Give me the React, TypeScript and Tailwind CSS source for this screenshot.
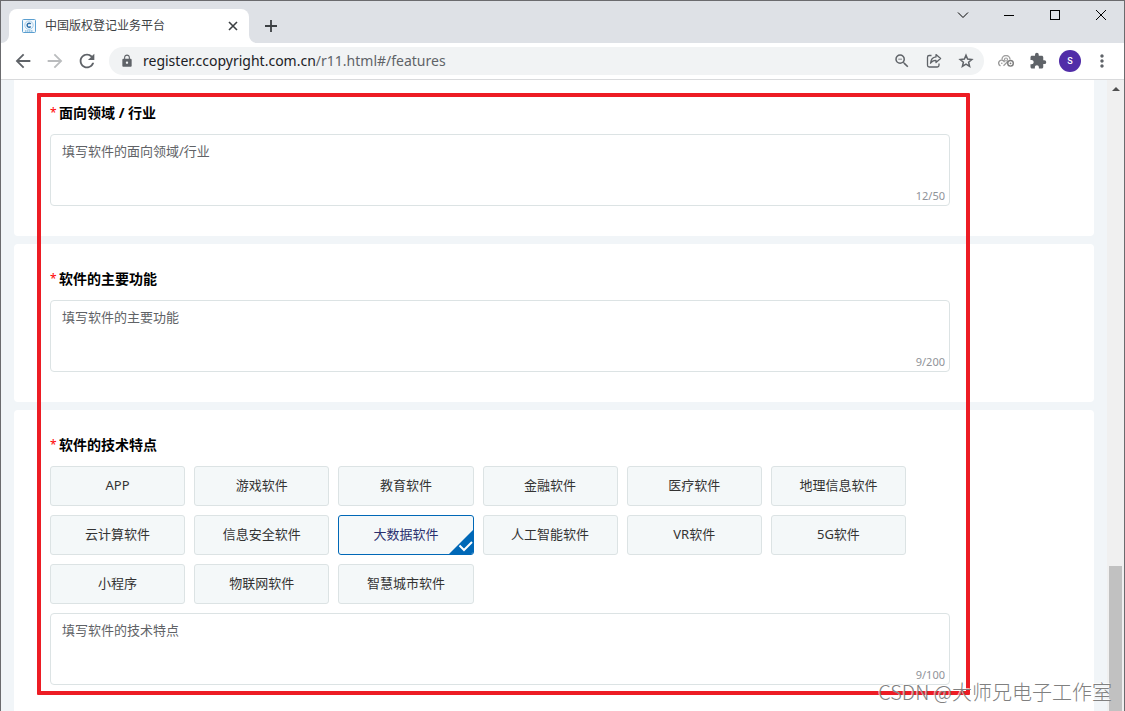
import { useState } from "react";
import {
    MdArrowBack,
    MdArrowForward,
    MdExtension,
    MdLock,
    MdMoreVert,
    MdRefresh,
    MdZoomOut,
} from "react-icons/md";

const softwareTypes = [
    "APP",
    "游戏软件",
    "教育软件",
    "金融软件",
    "医疗软件",
    "地理信息软件",
    "云计算软件",
    "信息安全软件",
    "大数据软件",
    "人工智能软件",
    "VR软件",
    "5G软件",
    "小程序",
    "物联网软件",
    "智慧城市软件",
];

function Favicon() {
    return (
        <svg viewBox="0 0 14 14" className="w-3.5 h-3.5 shrink-0" fill="none">
            <rect x="0.5" y="0.5" width="13" height="13" rx="1" fill="#f4f9fd" stroke="#5b9fd0" />
            <circle cx="7" cy="6.2" r="4.2" stroke="#a5cde9" strokeWidth="1" />
            <path d="M8.7 5A2 2 0 1 0 8.7 7.5" stroke="#2b6ea8" strokeWidth="1.5" />
            <path d="M3 12h8" stroke="#5b9fd0" strokeWidth="1.2" strokeDasharray="1.5 0.5" />
        </svg>
    );
}

function ShareIcon() {
    return (
        <svg viewBox="0 0 16 16" className="w-4 h-4" fill="none" stroke="currentColor" strokeWidth="1.3" strokeLinejoin="round">
            <path d="M5.5 2.5H3.2A1.7 1.7 0 0 0 1.5 4.2V12.3A1.7 1.7 0 0 0 3.2 14H11.3A1.7 1.7 0 0 0 13 12.3V10.5" />
            <path d="M10 1.6L14.6 5.6L10 9.6V7.4C7.6 7.3 5.8 8.2 4.5 10.2C4.8 6.7 6.7 4.3 10 3.9Z" />
        </svg>
    );
}

function StarIcon() {
    return (
        <svg viewBox="0 0 16 16" className="w-4 h-4" fill="none" stroke="currentColor" strokeWidth="1.5">
            <path d="M8 2.2L9.6 6.1L13.8 6.5L10.6 9.2L11.6 13.3L8 11.1L4.4 13.3L5.4 9.2L2.2 6.5L6.4 6.1Z" />
        </svg>
    );
}

function RingsIcon() {
    return (
        <svg viewBox="0 0 16 12" className="w-4 h-3" fill="none">
            <path d="M4 4.5A4 4 0 0 1 12 4.5" stroke="#a0a0a0" strokeWidth="1.4" />
            <circle cx="8" cy="4.5" r="1.5" stroke="#a0a0a0" strokeWidth="1.2" />
            <path d="M2.5 10.9A3 3 0 1 1 6.5 7.2" stroke="#9a9a9a" strokeWidth="1.4" />
            <circle cx="3.8" cy="8.3" r="0.8" fill="#9a9a9a" />
            <path d="M5.5 10.8L10 6.2" stroke="#9a9a9a" strokeWidth="1.3" />
            <circle cx="12.5" cy="8.3" r="2.8" stroke="#7c7c7c" strokeWidth="1.4" />
            <circle cx="12.5" cy="8.3" r="0.9" fill="#7c7c7c" />
        </svg>
    );
}

function TabStrip() {
    return (
        <div className="flex h-[42px] shrink-0 items-start bg-[#dee1e6]">
            <div className="relative ml-2 mt-2 flex h-[34px] w-60 items-center rounded-t-lg bg-white pl-[13px] pr-2">
                <svg viewBox="0 0 8 8" className="absolute -left-2 bottom-0 h-2 w-2">
                    <path d="M8 0V8H0A8 8 0 0 0 8 0Z" fill="#fff" />
                </svg>
                <svg viewBox="0 0 8 8" className="absolute -right-2 bottom-0 h-2 w-2">
                    <path d="M0 0V8H8A8 8 0 0 1 0 0Z" fill="#fff" />
                </svg>
                <Favicon />
                <span className="ml-[9px] flex-1 text-xs text-[#3c4043]">中国版权登记业务平台</span>
                <button aria-label="关闭标签页" className="flex h-4 w-4 items-center justify-center">
                    <svg viewBox="0 0 10 10" className="h-2.5 w-2.5" stroke="#3c4043" strokeWidth="1.6">
                        <path d="M1 1L9 9M9 1L1 9" />
                    </svg>
                </button>
            </div>
            <button aria-label="新标签页" className="ml-2 mt-[11px] flex h-7 w-7 items-center justify-center">
                <svg viewBox="0 0 12 12" className="h-3 w-3" stroke="#3c4043" strokeWidth="1.8">
                    <path d="M6 0V12M0 6H12" />
                </svg>
            </button>
            <div className="ml-auto flex text-black">
                <button aria-label="搜索标签页" className="flex h-7 w-[46px] items-center justify-center">
                    <svg viewBox="0 0 12 8" className="h-2 w-3" fill="none" stroke="currentColor">
                        <path d="M1 1.5L6 6.5L11 1.5" />
                    </svg>
                </button>
                <button aria-label="最小化" className="flex h-7 w-[46px] items-center justify-center">
                    <span className="h-px w-2.5 bg-black"></span>
                </button>
                <button aria-label="最大化" className="flex h-7 w-[46px] items-center justify-center">
                    <span className="h-2.5 w-2.5 border border-black"></span>
                </button>
                <button aria-label="关闭" className="flex h-7 w-[46px] items-center justify-center">
                    <svg viewBox="0 0 12 12" className="h-3 w-3" stroke="currentColor">
                        <path d="M1 1L11 11M11 1L1 11" />
                    </svg>
                </button>
            </div>
        </div>
    );
}

function Toolbar() {
    const iconButton = "flex h-7 w-8 shrink-0 items-center justify-center";

    return (
        <div className="flex h-[37px] shrink-0 items-center border-b border-[#d9dadc] bg-white pl-1.5 pr-1.5 text-[#5f6368]">
            <button aria-label="后退" className={iconButton}>
                <MdArrowBack className="h-[22px] w-[22px]" />
            </button>
            <button aria-label="前进" className={`${iconButton} text-[#babcbe]`}>
                <MdArrowForward className="h-[22px] w-[22px]" />
            </button>
            <button aria-label="重新加载" className={iconButton}>
                <MdRefresh className="h-[22px] w-[22px]" />
            </button>
            <div className="ml-1.5 flex h-7 flex-1 items-center rounded-full bg-[#f1f3f4] pl-[11px] pr-0.5">
                <MdLock className="h-3.5 w-3.5 shrink-0" />
                <div className="ml-[9px] flex-1 text-sm">
                    <span className="text-[#202124]">register.ccopyright.com.cn</span>/r11.html#/features
                </div>
                <button aria-label="缩放" className={iconButton}>
                    <MdZoomOut className="h-[18px] w-[18px]" />
                </button>
                <button aria-label="分享" className={iconButton}>
                    <ShareIcon />
                </button>
                <button aria-label="收藏" className={iconButton}>
                    <StarIcon />
                </button>
            </div>
            <div className="ml-1.5 flex">
                <button aria-label="扩展" className={iconButton}>
                    <RingsIcon />
                </button>
                <button aria-label="扩展程序" className={iconButton}>
                    <MdExtension className="h-[18px] w-[18px]" />
                </button>
                <button aria-label="用户" className={iconButton}>
                    <span className="flex h-[22px] w-[22px] items-center justify-center rounded-full bg-[#512da8] font-['Roboto',sans-serif] text-[9px] font-medium leading-none text-white">
                        S
                    </span>
                </button>
                <button aria-label="菜单" className={iconButton}>
                    <MdMoreVert className="h-5 w-5" />
                </button>
            </div>
        </div>
    );
}

function FieldLabel({ id, text }: { id: string; text: string }) {
    return (
        <label htmlFor={id} className="flex h-[22px] items-center text-sm font-bold text-black">
            <span className="w-[9px] text-xs font-normal text-[#ff0000]">*</span>
            {text}
        </label>
    );
}

function CountedTextarea({ id, initial, count }: { id: string; initial: string; count: string }) {
    return (
        <div className="relative h-[72px] max-w-[900px]">
            <textarea
                id={id}
                defaultValue={initial}
                className="block h-full w-full resize-none rounded border border-[#dce3e4] bg-white px-[11px] py-1.5 text-[13px] leading-5 text-[#606266] outline-none"
            />
            <span className="absolute bottom-0.5 right-[5px] text-[11px] leading-4 text-[#909399]">{count}</span>
        </div>
    );
}

function TypeOption({ name, checked, onChange }: { name: string; checked: boolean; onChange: () => void }) {
    return (
        <label
            className={`relative flex h-10 cursor-pointer items-center justify-center overflow-hidden rounded-[3px] border bg-[#f4f8f9] text-[13px] ${
                checked ? "border-[#0068b7] text-[#2a2f6e]" : "border-[#dce3e4] text-[#333]"
            }`}
        >
            <input type="checkbox" className="sr-only" checked={checked} onChange={onChange} />
            {name}
            {checked && (
                <svg viewBox="0 0 24 24" className="absolute bottom-0 right-0 h-6 w-6" fill="none">
                    <path d="M24 0V24H0Z" fill="#0068b7" />
                    <path d="M10.5 15.5L15 20L23 12" stroke="#fff" strokeWidth="2" />
                </svg>
            )}
        </label>
    );
}

export default function App() {
    const [selected, setSelected] = useState<string[]>(["大数据软件"]);

    const toggle = (name: string) =>
        setSelected((prev) => (prev.includes(name) ? prev.filter((n) => n !== name) : [...prev, name]));

    return (
        <div className="relative flex h-screen flex-col overflow-hidden border-x border-t border-[#6b6b6e] bg-white font-['Noto_Sans','Noto_Sans_CJK_SC',sans-serif]">
            <TabStrip />
            <Toolbar />

            <div className="flex min-h-0 flex-1">
                <main className="relative flex min-w-0 flex-1 flex-col gap-2 overflow-hidden bg-[#f1f5f8] px-[13px]">
                    <section className="shrink-0 rounded-b bg-white px-9 pb-[30px] pt-[22px]">
                        <FieldLabel id="industry" text="面向领域 / 行业" />
                        <div className="mt-2.5">
                            <CountedTextarea id="industry" initial="填写软件的面向领域/行业" count="12/50" />
                        </div>
                    </section>

                    <section className="shrink-0 rounded bg-white px-9 pb-[30px] pt-6">
                        <FieldLabel id="functions" text="软件的主要功能" />
                        <div className="mt-2.5">
                            <CountedTextarea id="functions" initial="填写软件的主要功能" count="9/200" />
                        </div>
                    </section>

                    <section className="shrink-0 rounded-t bg-white px-9 pb-[30px] pt-6">
                        <FieldLabel id="features" text="软件的技术特点" />
                        <div className="mt-2.5 grid max-w-[856px] grid-cols-6 gap-[9px]">
                            {softwareTypes.map((name) => (
                                <TypeOption
                                    key={name}
                                    name={name}
                                    checked={selected.includes(name)}
                                    onChange={() => toggle(name)}
                                />
                            ))}
                        </div>
                        <div className="mt-[9px]">
                            <CountedTextarea id="features" initial="填写软件的技术特点" count="9/100" />
                        </div>
                    </section>

                    {/* highlight around the fields to fill in */}
                    <div className="pointer-events-none absolute left-9 top-[13px] h-[602px] w-[933px] rounded-[1px] border-4 border-[#ed1c24]"></div>
                </main>

                <div className="flex w-[17px] shrink-0 flex-col items-center bg-[#f0f0f0]">
                    <svg viewBox="0 0 8 4" className="mt-[7px] h-1 w-2">
                        <path d="M4 0L8 4H0Z" fill="#505050" />
                    </svg>
                    <div className="mt-auto h-[145px] w-[13px] bg-[#c1c1c1]"></div>
                </div>
            </div>

            <div className="pointer-events-none absolute bottom-1 right-3 font-['Noto_Sans_CJK_SC',sans-serif] text-xl font-light leading-[30px] text-[#808080] [text-shadow:-1px_-1px_0_#ffffffb3]">
                CSDN @大师兄电子工作室
            </div>
        </div>
    );
}
